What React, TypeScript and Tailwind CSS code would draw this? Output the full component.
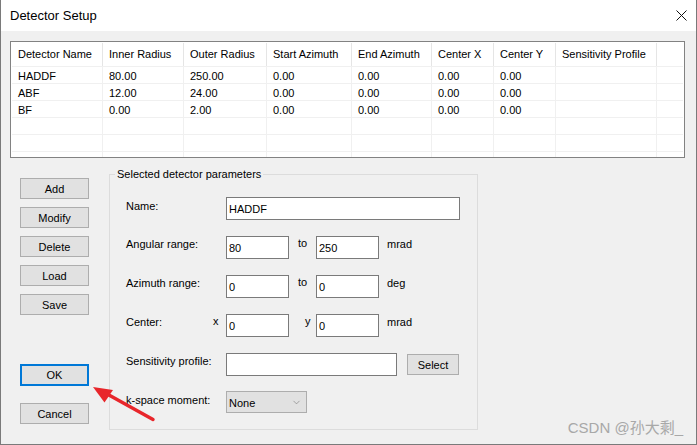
import { ChevronDown } from "lucide-react";

const columns = [
  { name: "Detector Name", width: "w-[91px]" },
  { name: "Inner Radius", width: "w-[81px]" },
  { name: "Outer Radius", width: "w-[83px]" },
  { name: "Start Azimuth", width: "w-[85px]" },
  { name: "End Azimuth", width: "w-[80px]" },
  { name: "Center X", width: "w-[62px]" },
  { name: "Center Y", width: "w-[62px]" },
  { name: "Sensitivity Profile", width: "w-[101px]" },
];

const rows = [
  ["HADDF", "80.00", "250.00", "0.00", "0.00", "0.00", "0.00", ""],
  ["ABF", "12.00", "24.00", "0.00", "0.00", "0.00", "0.00", ""],
  ["BF", "0.00", "2.00", "0.00", "0.00", "0.00", "0.00", ""],
  ["", "", "", "", "", "", "", ""],
  ["", "", "", "", "", "", "", ""],
];

const sideButtons = ["Add", "Modify", "Delete", "Load", "Save"];

function Field({ value, width }: { value: string; width: string }) {
  return (
    <div
      className={`${width} h-[23px] bg-white border border-[#7a7a7a] pl-[2px] flex items-center leading-[14px]`}
    >
      {value}
    </div>
  );
}

function WinButton({
  label,
  width = "w-[69px]",
  height = "h-[21px]",
  focused = false,
}: {
  label: string;
  width?: string;
  height?: string;
  focused?: boolean;
}) {
  return (
    <button
      className={`${width} ${height} bg-[#e1e1e1] flex items-center justify-center leading-[14px] ${
        focused ? "border-2 border-[#0078d7]" : "border border-[#adadad]"
      }`}
    >
      {label}
    </button>
  );
}

function DetectorTable() {
  return (
    <div className="ml-[9px] mt-[10px] w-[675px] h-[117px] border border-[#828282] bg-white p-[1px] overflow-hidden">
      <div className="flex h-[23px]">
        {columns.map((c) => (
          <div
            key={c.name}
            className={`${c.width} shrink-0 border-r border-[#e5e5e5] pl-[6px] flex items-center whitespace-nowrap`}
          >
            {c.name}
          </div>
        ))}
      </div>
      {rows.map((r, i) => (
        <div key={i} className="flex h-[17px] border-t border-[#f0f0f0]">
          {columns.map((c, j) => (
            <div
              key={c.name}
              className={`${c.width} shrink-0 border-r border-[#f0f0f0] pl-[6px] flex items-center pt-[2px]`}
            >
              {r[j]}
            </div>
          ))}
        </div>
      ))}
      <div className="flex h-[6px] border-t border-[#f0f0f0]">
        {columns.map((c) => (
          <div key={c.name} className={`${c.width} shrink-0 border-r border-[#f0f0f0]`} />
        ))}
      </div>
    </div>
  );
}

function Parameters() {
  return (
    <fieldset className="w-[369px] h-[263px] border border-[#dcdcdc] pl-[16px]">
      <legend className="ml-[-11px] px-[2px] leading-[14px]">Selected detector parameters</legend>
      <div className="flex flex-col gap-[16px] pt-[16px]">
        <div className="flex items-start">
          <span className="w-[100px] leading-[14px] pt-[2px]">Name:</span>
          <Field value="HADDF" width="w-[234px]" />
        </div>
        <div className="flex items-start">
          <span className="w-[100px] leading-[14px] pt-[1px]">Angular range:</span>
          <Field value="80" width="w-[63px]" />
          <span className="w-[27px] pl-[9px] leading-[14px]">to</span>
          <Field value="250" width="w-[63px]" />
          <span className="pl-[8px] leading-[14px] pt-[1px]">mrad</span>
        </div>
        <div className="flex items-start">
          <span className="w-[100px] leading-[14px] pt-[1px]">Azimuth range:</span>
          <Field value="0" width="w-[63px]" />
          <span className="w-[27px] pl-[9px] leading-[14px]">to</span>
          <Field value="0" width="w-[63px]" />
          <span className="pl-[8px] leading-[14px] pt-[1px]">deg</span>
        </div>
        <div className="flex items-start">
          <span className="w-[87px] leading-[14px] pt-[1px]">Center:</span>
          <span className="w-[13px] leading-[14px]">x</span>
          <Field value="0" width="w-[63px]" />
          <span className="w-[27px] pl-[16px] leading-[14px]">y</span>
          <Field value="0" width="w-[63px]" />
          <span className="pl-[8px] leading-[14px] pt-[1px]">mrad</span>
        </div>
        <div className="flex items-start">
          <span className="w-[100px] leading-[14px] pt-[1px]">Sensitivity profile:</span>
          <Field value="" width="w-[171px]" />
          <div className="ml-[10px] mt-[1px]">
            <WinButton label="Select" width="w-[52px]" />
          </div>
        </div>
        <div className="flex items-start">
          <span className="w-[100px] leading-[14px] pt-[1px]">k-space moment:</span>
          <div className="w-[81px] h-[22px] bg-[#e1e1e1] border border-[#adadad] pl-[2px] pr-[4px] flex items-center justify-between mt-[-1px]">
            <span className="leading-[14px] pt-[1px]">None</span>
            <ChevronDown className="w-[11px] h-[11px] text-[#707070]" strokeWidth={1.25} />
          </div>
        </div>
      </div>
    </fieldset>
  );
}

export default function App() {
  return (
    <div
      className="relative w-[697px] h-[445px] bg-[#f0f0f0] border-l border-r border-b border-[#7a7a7a] text-[11px] text-black flex flex-col"
      style={{ fontFamily: '"Liberation Sans", Arial, sans-serif' }}
    >
      <div className="h-[31px] bg-white flex items-center justify-between pl-[9px] pr-[9px] shrink-0">
        <span className="text-[13px]">Detector Setup</span>
        <svg width="11" height="11" viewBox="0 0 11 11" className="text-[#111]">
          <path d="M0.5 0.5 L10.5 10.5 M10.5 0.5 L0.5 10.5" stroke="currentColor" strokeWidth="1" />
        </svg>
      </div>

      <DetectorTable />

      <div className="flex mt-[9px]">
        <div className="ml-[19px] w-[69px] pt-[11px] flex flex-col">
          <div className="flex flex-col gap-[8px]">
            {sideButtons.map((b) => (
              <WinButton key={b} label={b} />
            ))}
          </div>
          <div className="mt-[49px] flex flex-col gap-[17px]">
            <WinButton label="OK" height="h-[22px]" focused />
            <WinButton label="Cancel" />
          </div>
        </div>
        <div className="ml-[20px]">
          <Parameters />
        </div>
      </div>

      <svg
        className="absolute left-[84px] top-[380px]"
        width="75"
        height="45"
        viewBox="0 0 75 45"
      >
        <path d="M23 14.5 L68 39.5" stroke="#e8262b" strokeWidth="3.5" strokeLinecap="round" />
        <path d="M8 7 L19.5 22.5 L28 10 Z" fill="#e8262b" />
      </svg>

      <div
        className="absolute right-[13px] bottom-[7px] text-[15px] text-[#a8a8a8] leading-[18px]"
        style={{ fontFamily: '"Liberation Sans", "Noto Sans CJK SC", sans-serif' }}
      >
        CSDN @孙大剩_
      </div>
    </div>
  );
}
